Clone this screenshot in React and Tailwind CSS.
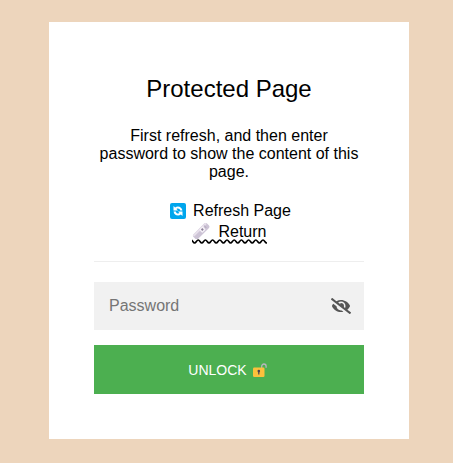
import { FaEyeSlash } from "react-icons/fa";

const WAVE_STEP = 3.6;
const wavePath =
  "M-1 1" +
  Array.from({ length: 22 }, (_, i) => {
    const x = -1 + i * WAVE_STEP;
    const from = i % 2 === 0 ? 1 : 4;
    const to = i % 2 === 0 ? 4 : 1;
    return `C${x + 1.5} ${from} ${x + 2.1} ${to} ${x + WAVE_STEP} ${to}`;
  }).join("");

function RefreshIcon() {
  return (
    <svg className="h-4 w-4 shrink-0" viewBox="0 0 16 16" fill="none">
      <rect width="16" height="16" rx="2" fill="#00a6ed" />
      <path d="M3.500 2.900v4.500H8L6.500 5.900c1.700-1 3.500.1 3.700 1.700h2.200C12.200 4.200 8.200 2.300 5.100 4.400z" fill="#fff" />
      <path d="M12.500 13.100V8.600H8l1.500 1.500c-1.700 1-3.500-.1-3.700-1.700H3.600c.2 3.400 4.200 5.300 7.300 3.200z" fill="#fff" />
    </svg>
  );
}

function LevelIcon() {
  return (
    <svg className="h-4 w-[18px] shrink-0" viewBox="0 0 18 16" fill="none">
      <g transform="rotate(-45 9 8)">
        <rect x="-0.500" y="5" width="19" height="6.500" rx="2" fill="#cdc4d6" />
        <rect x="0" y="5" width="18" height="2.200" rx="1" fill="#e7e0eb" />
        <rect x="8.500" y="5.800" width="5" height="4.500" rx="1" fill="#f5f1f7" />
        <rect x="10" y="6.900" width="2" height="2" fill="#8d8299" />
        <path d="M15 6.500v3" stroke="#b5acbf" />
      </g>
    </svg>
  );
}

function UnlockIcon() {
  return (
    <svg className="h-[14px] w-[14px] shrink-0" viewBox="0 0 14 14" fill="none">
      <path d="M8.700 5V3.200a2.200 2.200 0 0 1 4.400 0v1.600" stroke="#b7b5bd" strokeWidth="1.300" />
      <rect y="4.500" width="11.500" height="9.500" rx="1.200" fill="#fcc13c" />
      <circle cx="5.800" cy="8.100" r="1.300" fill="#4b4052" />
      <path d="M5.800 8v3.500" stroke="#4b4052" strokeWidth="1.200" />
    </svg>
  );
}

export default function App() {
  return (
    <main className="h-[463px] w-full bg-[#edd5bc] pt-[22px] pl-[5px] font-['Liberation_Sans',Arial,sans-serif] text-black">
      <form className="mx-auto h-[417px] w-[360px] bg-white px-[45px] pt-[53px] text-center">
        <h1 className="text-2xl leading-7">Protected Page</h1>
        <p className="mt-6 text-base leading-[18px]">
          First refresh, and then enter password to show the content of this page.
        </p>
        <div className="mt-[19px] flex items-center justify-center gap-[7px] pl-[3px] text-base leading-[21px]">
          <RefreshIcon />
          <a>Refresh Page</a>
        </div>
        <div className="mx-auto mt-px w-[75px]">
          <div className="flex h-[18px] items-center justify-between text-base leading-[21px]">
            <LevelIcon />
            <a>Return</a>
          </div>
          <svg className="-mt-px block h-[5px] w-[75px]" viewBox="0 0 75 5" fill="none">
            <path d={wavePath} stroke="#000" strokeWidth="1.600" />
          </svg>
        </div>
        <hr className="mt-[17px] border-t border-[#eee]" />
        <div className="mt-5 flex h-12 items-center justify-between bg-[#f1f1f1] pr-[13px] pl-[15px]">
          <input
            type="password"
            placeholder="Password"
            className="w-40 bg-transparent text-base outline-none placeholder:text-[#757575]"
          />
          <FaEyeSlash className="h-4 w-5 text-[#555]" />
        </div>
        <button type="button" className="mt-[15px] flex h-[49px] w-full items-center justify-center gap-[6px] bg-[#4caf50] pr-[3px] text-sm text-white">
          <span>UNLOCK</span>
          <UnlockIcon />
        </button>
      </form>
    </main>
  );
}
